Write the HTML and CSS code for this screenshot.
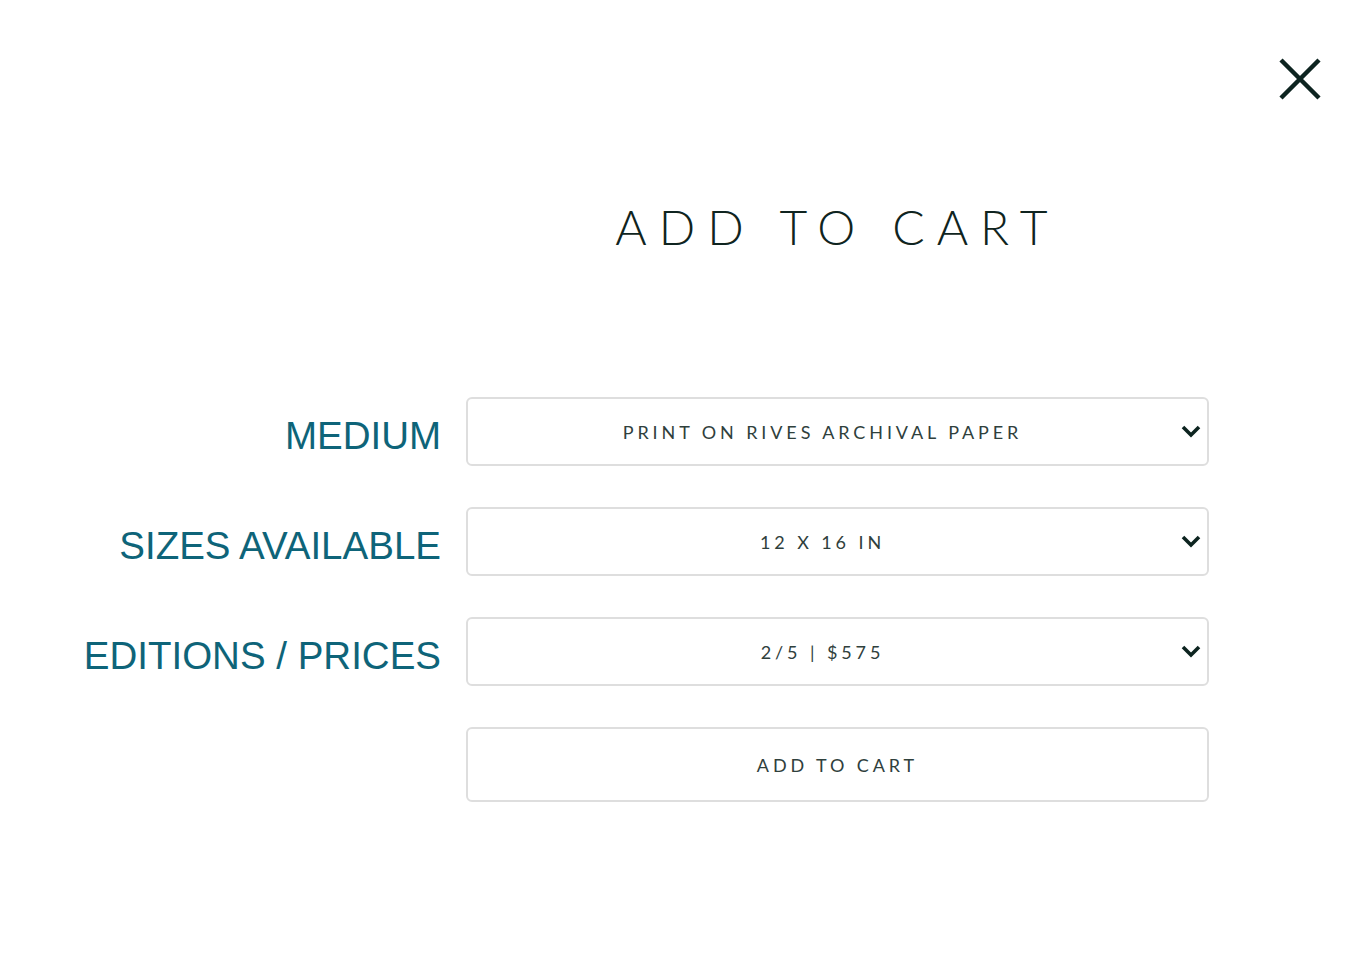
FILE: index.html
```html
<!DOCTYPE html>
<html lang="en">
<head>
  <meta charset="UTF-8" />
  <meta name="viewport" content="width=device-width, initial-scale=1.0"/>
  <title>Add to Cart</title>
  <link rel="stylesheet" href="styles.css">
</head>
<body>
  <div class="modal">
    <div class="modal-top">
      <button class="close" type="button" aria-label="Close">
        <svg width="42" height="42" viewBox="0 0 42 42">
          <path d="M2 2 L40 40 M40 2 L2 40" stroke="#0d2420" stroke-width="4.5" fill="none"/>
        </svg>
      </button>
    </div>

    <form class="cart-form">
      <h1 class="title">ADD TO CART</h1>

      <label class="field-label" for="medium">MEDIUM</label>
      <div class="select-wrap">
        <select id="medium">
          <option>PRINT ON RIVES ARCHIVAL PAPER</option>
        </select>
        <svg class="chevron" width="20" height="13" viewBox="0 0 20 13">
          <path d="M2 2 L10 10 L18 2" stroke="#0d2420" stroke-width="3.6" fill="none"/>
        </svg>
      </div>

      <label class="field-label" for="size">SIZES AVAILABLE</label>
      <div class="select-wrap">
        <select id="size">
          <option>12 X 16 IN</option>
        </select>
        <svg class="chevron" width="20" height="13" viewBox="0 0 20 13">
          <path d="M2 2 L10 10 L18 2" stroke="#0d2420" stroke-width="3.6" fill="none"/>
        </svg>
      </div>

      <label class="field-label" for="edition">EDITIONS / PRICES</label>
      <div class="select-wrap">
        <select id="edition">
          <option>2/5 | $575</option>
        </select>
        <svg class="chevron" width="20" height="13" viewBox="0 0 20 13">
          <path d="M2 2 L10 10 L18 2" stroke="#0d2420" stroke-width="3.6" fill="none"/>
        </svg>
      </div>

      <button class="add-btn" type="button">ADD TO CART</button>
    </form>
  </div>
</body>
</html>
```

FILE: styles.css
```css
body {
  margin: 0;
  background: #fff;
  font-family: "Liberation Sans", Arial, sans-serif;
}
.modal {
  min-height: 972px;
}
.modal-top {
  display: flex;
  justify-content: flex-end;
  padding: 58px 37px 0 0;
}
.close {
  background: none;
  border: 0;
  padding: 0;
  width: 42px;
  height: 42px;
  cursor: pointer;
}
.close svg {
  display: block;
}
.cart-form {
  display: grid;
  grid-template-columns: 441px 743px;
  column-gap: 25px;
  row-gap: 41px;
  align-items: center;
}
.title {
  grid-column: 2;
  margin: 103px 0 105px;
  text-align: center;
  font-family: Lato, "Open Sans", sans-serif;
  font-weight: 300;
  font-size: 48px;
  line-height: 1;
  letter-spacing: 12px;
  color: #0f2420;
}
.field-label {
  grid-column: 1;
  text-align: right;
  font-size: 38.5px;
  color: #0e6479;
  margin-top: 8px;
}
.select-wrap {
  grid-column: 2;
  position: relative;
}
select, .add-btn {
  display: block;
  width: 100%;
  height: 69px;
  border: 2px solid #dedede;
  border-radius: 6px;
  background: #fff;
  font-family: Lato, "Open Sans", sans-serif;
  font-size: 18px;
  letter-spacing: 3.9px;
  color: #2f403c;
}
select {
  appearance: none;
  -webkit-appearance: none;
  text-align: center;
  text-align-last: center;
  padding: 0 30px 0 0;
}
.chevron {
  position: absolute;
  right: 8px;
  top: 28px;
  pointer-events: none;
}
.add-btn {
  grid-column: 2;
  height: 75px;
  cursor: pointer;
}
```
